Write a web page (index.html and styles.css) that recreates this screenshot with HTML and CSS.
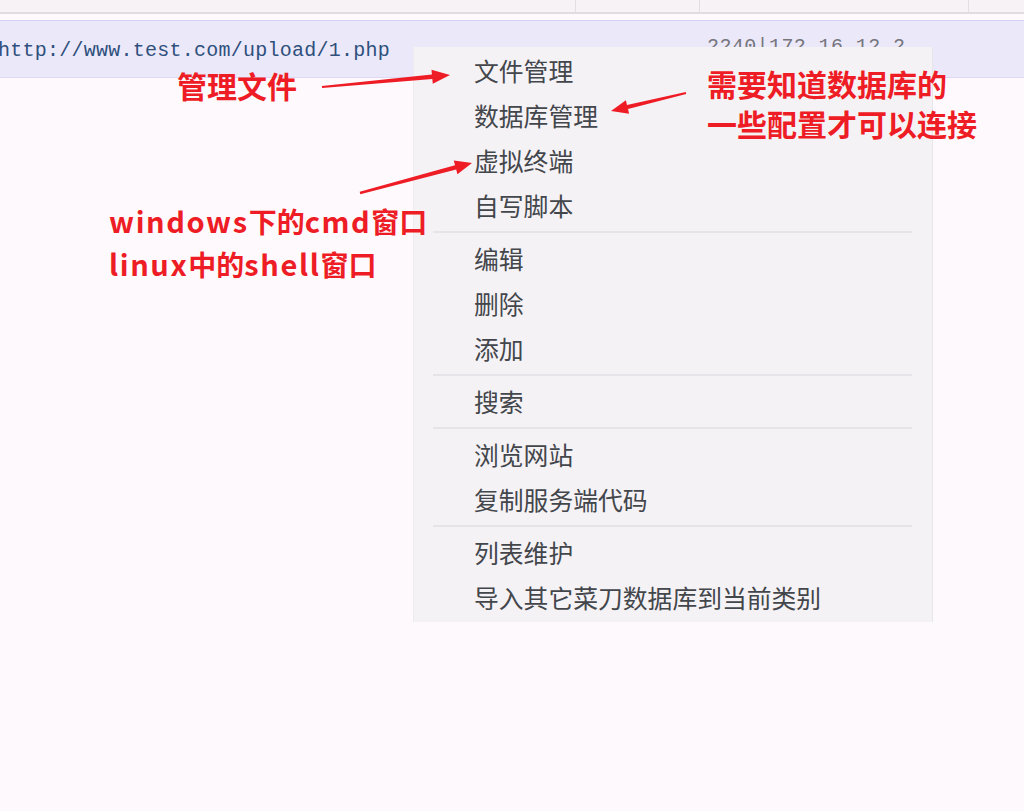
FILE: index.html
```html
<!DOCTYPE html>
<html lang="zh-CN">
<head>
<meta charset="utf-8">
<title>菜刀</title>
<link rel="stylesheet" href="styles.css">
</head>
<body>
<div class="page">
  <div class="header">
    <div class="hcell c1"></div>
    <div class="hcell c2"></div>
    <div class="hcell c3"></div>
    <div class="hcell c4"></div>
  </div>
  <div class="row">
    <div class="url">http://www.test.com/upload/1.php</div>
    <div class="ip">2240|172.16.12.2</div>
  </div>

  <ul class="menu">
    <li class="item">文件管理</li>
    <li class="item">数据库管理</li>
    <li class="item">虚拟终端</li>
    <li class="item">自写脚本</li>
    <li class="sep"></li>
    <li class="item">编辑</li>
    <li class="item">删除</li>
    <li class="item">添加</li>
    <li class="sep"></li>
    <li class="item">搜索</li>
    <li class="sep"></li>
    <li class="item">浏览网站</li>
    <li class="item">复制服务端代码</li>
    <li class="sep"></li>
    <li class="item">列表维护</li>
    <li class="item">导入其它菜刀数据库到当前类别</li>
  </ul>

  <div class="note note-file">管理文件</div>
  <div class="note note-db">需要知道数据库的<br>一些配置才可以连接</div>
  <div class="note note-term"><span class="lat">windows</span>下的<span class="lat">cmd</span>窗口<br><span class="lat">linux</span>中的<span class="lat">shell</span>窗口</div>

  <svg class="arrows" width="1024" height="811" viewBox="0 0 1024 811">
    <polygon points="322.1,88 432.3,78.9 432.8,83.7 450,75 431.5,69.7 431.9,74.5 321.9,86"/>
    <polygon points="685.8,92 627,104.9 625.9,100.2 611,111 629.1,113.8 628,109.1 686.2,94"/>
    <polygon points="360.3,194.2 456.2,169.5 457.4,174.2 472,163 453.8,160.6 455,165.3 359.7,191.8"/>
  </svg>
</div>
</body>
</html>
```
FILE: styles.css
```css
html, body {
  margin: 0;
  padding: 0;
}
body {
  background: #fdf9fc;
  width: 1024px;
  height: 811px;
  overflow: hidden;
}
.page {
  position: relative;
  width: 1024px;
  height: 811px;
}
.header {
  display: flex;
  height: 12px;
  background: #f6f2f6;
  border-bottom: 2px solid #e0dde1;
}
.hcell {
  height: 100%;
  border-right: 1px solid #e2dfe3;
  box-sizing: border-box;
}
.c1 { width: 576px; }
.c2 { width: 124px; }
.c3 { width: 269px; }
.c4 { flex: 1; border-right: none; }

.row {
  margin-top: 6px;
  height: 56px;
  background: #ebe8fa;
  border-top: 1px solid #d3cff6;
  border-bottom: 1px solid #ddd9f6;
  display: flex;
  align-items: flex-start;
  font-family: "Liberation Mono", "DejaVu Sans Mono", monospace;
  font-size: 20px;
}
.url {
  margin-left: -2px;
  padding-top: 18px;
  width: 709px;
  color: #2f507c;
  line-height: 24px;
  letter-spacing: 0.25px;
}
.ip {
  padding-top: 14px;
  color: #76767c;
  line-height: 24px;
  letter-spacing: 0.4px;
}

.menu {
  position: absolute;
  left: 413px;
  top: 47px;
  width: 520px;
  margin: 0;
  padding: 1px 0 2px;
  list-style: none;
  background: #f5f2f6;
  border-right: 1px solid #e9e6ea;
  border-left: 1px solid #efecf0;
  box-sizing: border-box;
  font-family: "Noto Sans CJK SC", "Noto Sans", sans-serif;
  font-size: 24.8px;
  color: #43464b;
}
.item {
  height: 45px;
  line-height: 45px;
  padding-left: 60px;
}
.sep {
  height: 8px;
  display: flex;
  align-items: center;
  padding: 0 20px 0 19px;
}
.sep::before {
  content: "";
  flex: 1;
  height: 2px;
  background: #e7e4e9;
}

.note {
  position: absolute;
  font-family: "Noto Sans CJK SC", "Noto Sans", sans-serif;
  font-weight: 700;
  color: #ee1c25;
  white-space: nowrap;
}
.note-file {
  left: 177px;
  top: 69px;
  font-size: 30px;
  line-height: 32px;
}
.note-db {
  left: 707px;
  top: 63px;
  font-size: 30px;
  line-height: 40px;
}
.note-term {
  left: 109px;
  top: 199px;
  font-size: 28px;
  line-height: 42px;
}
.note-term .lat {
  font-size: 29px;
  letter-spacing: 1.6px;
}
.arrows {
  position: absolute;
  left: 0;
  top: 0;
  pointer-events: none;
}
.arrows polygon {
  fill: #ee1c25;
}
```
